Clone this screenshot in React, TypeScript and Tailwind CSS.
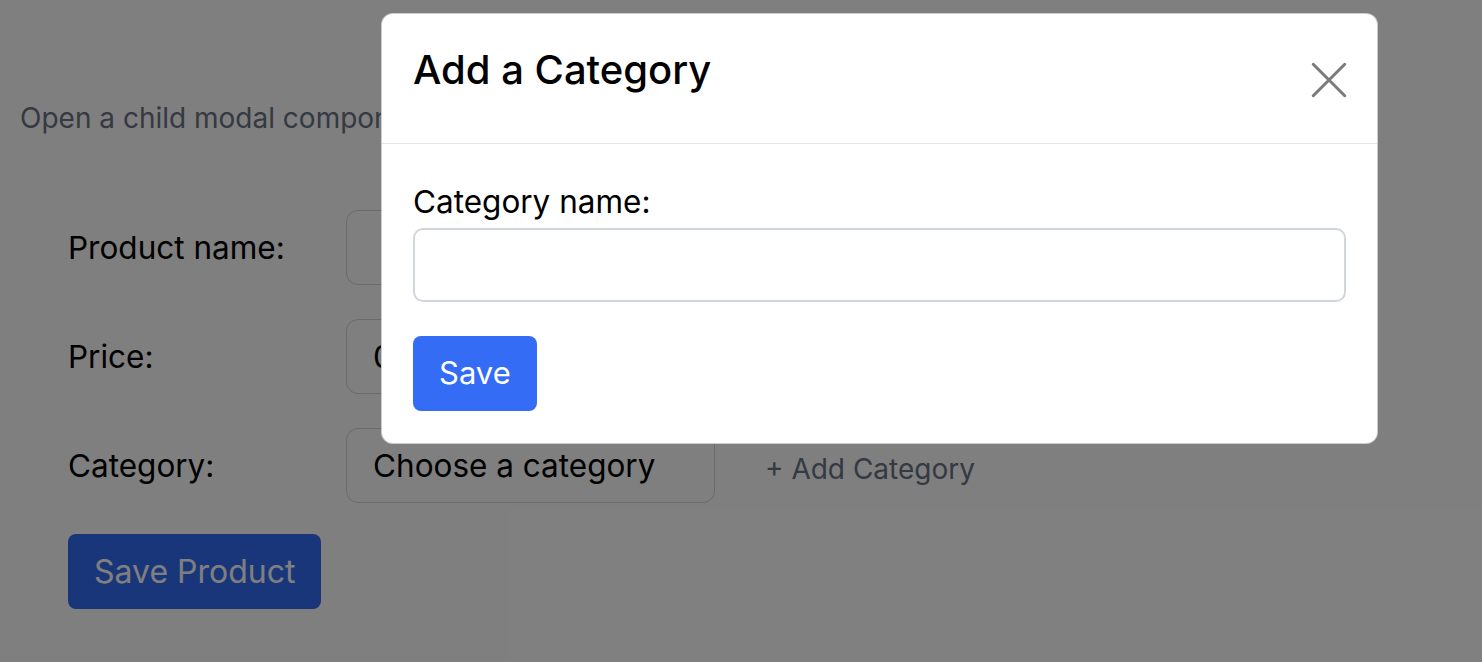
import * as React from "react"

const font = { fontFamily: "Inter, 'Noto Sans', sans-serif" }

function FormRow({ label, children }: { label: string; children: React.ReactNode }) {
  return (
    <div className="flex items-center">
      <label className="w-[278px] shrink-0 text-[31.5px] text-black">{label}</label>
      {children}
    </div>
  )
}

export default function App() {
  const [name, setName] = React.useState("")

  return (
    <div className="relative h-[662px] w-full overflow-hidden bg-white" style={font}>
      {/* page */}
      <div className="px-[20px] pt-[98px]">
        <p className="text-[28px] leading-[40px] text-gray-500">
          Open a child modal component to add a new category
        </p>

        <div className="mt-[72px] flex flex-col gap-[34px] pl-[48px]">
          <FormRow label="Product name:">
            <input className="h-[75px] w-[369px] rounded-[12px] border border-gray-300 px-[26px] text-[31.5px] outline-none" />
          </FormRow>
          <FormRow label="Price:">
            <input
              defaultValue="0"
              className="h-[75px] w-[369px] rounded-[12px] border border-gray-300 px-[26px] text-[31.5px] text-black outline-none"
            />
          </FormRow>
          <FormRow label="Category:">
            <div className="flex h-[75px] w-[369px] items-center rounded-[12px] border border-gray-300 px-[26px] text-[31.5px] text-black">
              Choose a category
            </div>
            <span className="ml-[50px] mt-[6px] text-[28px] text-gray-500">+ Add Category</span>
          </FormRow>
          <div className="-mt-[3px]">
            <button className="h-[75px] rounded-[8px] bg-[#346cf5] px-[26px] text-[32px] text-white">
              Save Product
            </button>
          </div>
        </div>
      </div>

      {/* overlay */}
      <div className="absolute inset-0 bg-black/50" />

      {/* modal */}
      <div className="absolute left-[381px] top-[13px] w-[997px] rounded-[12px] border border-black/20 bg-white">
        <div className="flex h-[130px] items-start justify-between border-b border-gray-200 pl-[31px] pr-[30px] pt-[30px]">
          <h2 className="text-[40px] font-medium leading-[52px] text-black">Add a Category</h2>
          <button className="mt-[18px] text-[#7b7b7b]">
            <svg width="36" height="36" viewBox="0 0 24 24" fill="none" stroke="currentColor" strokeWidth="2" strokeLinecap="round">
              <path d="M1.5 1.5l21 21M22.5 1.5l-21 21" />
            </svg>
          </button>
        </div>
        <div className="px-[31px] pb-[32px] pt-[38px]">
          <label className="block text-[31.5px] leading-[40px] text-black">Category name:</label>
          <input
            value={name}
            onChange={(e) => setName(e.target.value)}
            className="mt-[6px] h-[74px] w-full rounded-[10px] border-2 border-gray-300 px-[20px] text-[31.5px] outline-none"
          />
          <button className="mt-[34px] h-[75px] rounded-[8px] bg-[#346cf5] px-[26px] text-[31px] text-white">
            Save
          </button>
        </div>
      </div>
    </div>
  )
}
